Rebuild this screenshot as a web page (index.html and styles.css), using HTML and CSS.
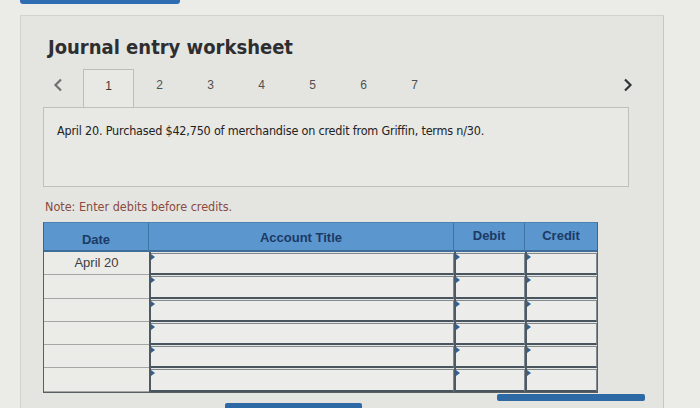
FILE: index.html
```html
<!DOCTYPE html>
<html>
<head>
<meta charset="utf-8">
<link rel="stylesheet" href="styles.css">
</head>
<body>
<div class="topbar"></div>
<div class="panel">
  <h1 class="title">Journal entry worksheet</h1>
  <div class="tabs">
    <div class="nav nav-prev"><svg width="10" height="14" viewBox="0 0 10 14"><path d="M8 1.5 L2.5 7 L8 12.5" fill="none" stroke="#707070" stroke-width="2.2"/></svg></div>
    <div class="tab active">1</div>
    <div class="tab">2</div>
    <div class="tab">3</div>
    <div class="tab">4</div>
    <div class="tab">5</div>
    <div class="tab">6</div>
    <div class="tab">7</div>
    <div class="spacer"></div>
    <div class="nav nav-next"><svg width="10" height="14" viewBox="0 0 10 14"><path d="M2 1.5 L7.5 7 L2 12.5" fill="none" stroke="#303438" stroke-width="2.2"/></svg></div>
  </div>
  <div class="question">April 20. Purchased $42,750 of merchandise on credit from Griffin, terms n/30.</div>
  <p class="note">Note: Enter debits before credits.</p>
  <div class="journal">
    <div class="th th-date">Date</div>
    <div class="th">Account Title</div>
    <div class="th th-num">Debit</div>
    <div class="th th-num">Credit</div>

    <div class="date">April 20</div><div class="field"><div class="inp"></div></div><div class="field"><div class="inp"></div></div><div class="field"><div class="inp"></div></div>
    <div class="date"></div><div class="field"><div class="inp"></div></div><div class="field"><div class="inp"></div></div><div class="field"><div class="inp"></div></div>
    <div class="date"></div><div class="field"><div class="inp"></div></div><div class="field"><div class="inp"></div></div><div class="field"><div class="inp"></div></div>
    <div class="date"></div><div class="field"><div class="inp"></div></div><div class="field"><div class="inp"></div></div><div class="field"><div class="inp"></div></div>
    <div class="date"></div><div class="field"><div class="inp"></div></div><div class="field"><div class="inp"></div></div><div class="field"><div class="inp"></div></div>
    <div class="date"></div><div class="field"><div class="inp"></div></div><div class="field"><div class="inp"></div></div><div class="field"><div class="inp"></div></div>
  </div>
  <div class="buttons">
    <div class="btn btn-a"></div>
    <div class="btn btn-b"></div>
  </div>
</div>
</body>
</html>
```

FILE: styles.css
```css
html, body {
  margin: 0;
  padding: 0;
}
body {
  width: 700px;
  height: 408px;
  overflow: hidden;
  background: #ebebe8;
  font-family: "DejaVu Sans", Verdana, sans-serif;
}
.topbar {
  margin-left: 20px;
  width: 160px;
  height: 4px;
  background: #2f6db2;
  border-radius: 0 0 3px 3px;
}
.panel {
  box-sizing: border-box;
  margin: 11px 0 0 20px;
  width: 644px;
  height: 393px;
  overflow: hidden;
  border: 1px solid #d2d2ce;
  border-right-color: #c6c6c2;
  border-bottom: none;
  background: #e4e5e1;
  padding: 0 0 0 22px;
}
.title {
  margin: 19px 0 0 5px;
  font-family: "DejaVu Sans Condensed", "DejaVu Sans", sans-serif;
  font-size: 20px;
  line-height: 24px;
  font-weight: bold;
  color: #2e2e30;
}
.tabs {
  display: flex;
  align-items: stretch;
  width: 600px;
  height: 38px;
  margin-top: 10px;
  position: relative;
  z-index: 1;
}
.nav {
  display: flex;
  align-items: center;
  justify-content: center;
  padding-bottom: 7px;
}
.nav-prev {
  width: 40px;
  justify-content: flex-start;
  padding-left: 10px;
  box-sizing: border-box;
}
.nav-next {
  width: 30px;
}
.spacer {
  flex: 1;
}
.tab {
  box-sizing: border-box;
  width: 51px;
  display: flex;
  align-items: center;
  justify-content: center;
  padding-bottom: 7px;
  font-family: "Liberation Sans", Arial, sans-serif;
  font-size: 12px;
  color: #505050;
}
.tab.active {
  border: 1px solid #bdbdb9;
  border-bottom: none;
  background: #e8e8e5;
  height: 38px;
  margin-bottom: -1px;
  padding-bottom: 6px;
  color: #3a3a3a;
}
.question {
  box-sizing: border-box;
  width: 586px;
  height: 80px;
  border: 1px solid #bfbfbb;
  background: #e8e8e5;
  padding: 15px 0 0 13px;
  font-size: 12.5px;
  letter-spacing: -0.2px;
  color: #222;
  font-family: "DejaVu Sans Condensed", "DejaVu Sans", sans-serif;
}
.note {
  margin: 12px 0 0 2px;
  font-size: 12.5px;
  line-height: 15px;
  color: #8a4a3e;
  font-family: "DejaVu Sans Condensed", "DejaVu Sans", sans-serif;
}
.journal {
  margin-top: 8px;
  display: grid;
  grid-template-columns: 105px 305px 71px 72px;
  grid-template-rows: 29px repeat(6, 23.3px);
  width: max-content;
  font-family: "Liberation Sans", Arial, sans-serif;
  border: 1px solid #5a5f64;
  border-top-color: #4a80b2;
}
.th {
  box-sizing: border-box;
  display: flex;
  align-items: center;
  justify-content: center;
  padding-top: 1px;
  background: #5b96cf;
  color: #1b3a64;
  font-size: 13px;
  font-weight: bold;
  border-right: 1px solid #3f74a6;
  border-bottom: 2px solid #3e6d99;
}
.th-date {
  padding-top: 5px;
}
.th-num {
  padding-top: 0;
  padding-bottom: 3px;
}
.th:nth-child(4) {
  border-right: none;
}
.date {
  box-sizing: border-box;
  display: flex;
  align-items: center;
  justify-content: center;
  padding-bottom: 1px;
  border-bottom: 1px solid #a4a6a6;
  background: #ebebe8;
  font-size: 13px;
  color: #3e3e3e;
}
.field {
  box-sizing: border-box;
  border-left: 2px solid #4d5963;
  padding-top: 1px;
}
.inp {
  position: relative;
  box-sizing: border-box;
  height: 100%;
  border-top: 1px solid #7f898f;
  border-right: 1px solid #7f898f;
  border-bottom: 2px solid #48545e;
  background: #ecedea;
}
.inp::before {
  content: "";
  position: absolute;
  left: 0;
  top: 0;
  border-top: 3px solid transparent;
  border-bottom: 3px solid transparent;
  border-left: 4px solid #2f6195;
}
.buttons {
  display: flex;
  align-items: flex-start;
}
.btn {
  height: 7px;
  background: #2d6aa5;
  border-radius: 2px;
}
.btn-a {
  width: 137px;
  margin: 10px 0 0 182px;
}
.btn-b {
  width: 148px;
  margin: 1px 0 0 135px;
}
```
